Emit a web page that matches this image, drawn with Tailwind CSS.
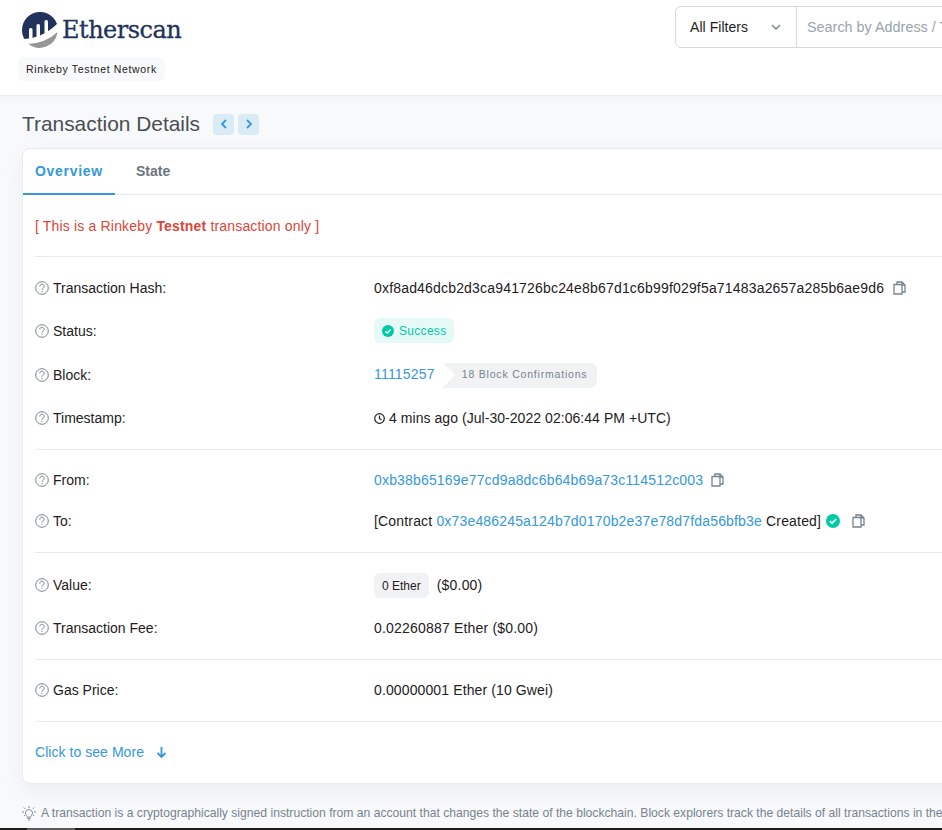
<!DOCTYPE html>
<html lang="en">
<head>
    <meta charset="UTF-8">
    <meta name="viewport" content="width=device-width, initial-scale=1.0">
    <title>Transaction Details</title>
    <script src="https://cdn.jsdelivr.net/npm/@tailwindcss/browser@4"></script>
</head>
<body class="bg-[#f8f9fa] font-['Liberation_Sans',Arial,sans-serif] text-[14px] text-[#1e2022] w-[942px] h-[830px] overflow-hidden relative">

    <!-- header -->
    <header class="bg-white h-[96px] border-b border-[#e7eaf3] flex justify-between shadow-[0_1px_10px_rgba(151,164,175,0.1)]">
        <div class="pl-[22px] pt-[12px]">
            <div class="flex items-center h-[36px]">
                <svg class="w-[36px] h-[36px]" viewBox="0 0 36 36">
                    <circle cx="18" cy="18" r="18" fill="#21325b"/>
                    <rect x="7" y="16" width="3.500" height="14" rx="1.500" fill="#fff"/>
                    <rect x="14.500" y="12" width="3.500" height="16" rx="1.500" fill="#fff"/>
                    <rect x="22.500" y="8" width="3.500" height="16" rx="1.500" fill="#fff"/>
                    <path d="M0 27Q20 27 36 11L40 40H0z" fill="#fff"/>
                    <path d="M6 32Q24 31 35.500 20A18 18 0 0 1 6 31.500z" fill="#979695"/>
                </svg>
                <span class="ml-[4px] font-['DejaVu_Serif',serif] text-[24px] leading-none text-[#21325b] tracking-[-0.5px] [-webkit-text-stroke:0.3px_#21325b]">Etherscan</span>
            </div>
            <div class="mt-[9px] -ml-[4px] inline-block bg-[#f8f9fa] rounded-md px-[8px] h-[24px] leading-[24px] text-[10.5px] tracking-[0.65px]">
                <span>Rinkeby Testnet Network</span>
            </div>
        </div>
        <div class="pt-[6px]">
            <div class="flex w-[400px] h-[42px] -mr-[133px] border border-[#d5dae2] rounded-l-md">
                <div class="w-[121px] flex items-center justify-between pl-[14px] pr-[15px] border-r border-[#d5dae2]">
                    <span class="tracking-[0.05px] pt-[1px]">All Filters</span>
                    <svg class="w-[10px] h-[10px]" viewBox="0 0 10 10" fill="none" stroke="#77838f" stroke-width="1.500"><path d="M1 3l4 4 4-4"/></svg>
                </div>
                <div class="pl-[10px] pt-[1px] flex items-center text-[14.4px] text-[#97a4af] whitespace-nowrap">Search by Address / Txn Hash / Block</div>
            </div>
        </div>
    </header>

    <main class="w-[1100px] pl-[22px]">
        <div class="h-[52px] pt-[4px] flex items-center gap-[4px]">
            <h1 class="w-[178px] whitespace-nowrap text-[20.9px] text-[#4a4f55] mr-[9px]">Transaction Details</h1>
            <a class="w-[21px] h-[21px] rounded bg-[#3498db]/15 flex items-center justify-center">
                <svg class="w-[10px] h-[10px]" viewBox="0 0 10 10" fill="none" stroke="#3498db" stroke-width="1.800"><path d="M7 1L3 5l4 4"/></svg>
            </a>
            <a class="w-[21px] h-[21px] rounded bg-[#3498db]/15 flex items-center justify-center">
                <svg class="w-[10px] h-[10px]" viewBox="0 0 10 10" fill="none" stroke="#3498db" stroke-width="1.800"><path d="M3 1l4 4-4 4"/></svg>
            </a>
        </div>

        <!-- card -->
        <section class="bg-white border border-[#e7eaf3] rounded-lg h-[636px] shadow-[0_8px_20px_rgba(189,197,209,0.2)]">
            <nav class="h-[46px] border-b border-[#e7eaf3] flex font-bold">
                <a class="w-[92px] h-[46px] pl-[12px] pt-[12px] text-[#3498db] border-b-2 border-[#3498db] tracking-[0.7px]">Overview</a>
                <a class="pl-[21px] pt-[12px] text-[#6c757e]">State</a>
            </nav>

            <div class="px-[12px]">
                <div class="h-[62px] pt-[1px] flex items-center border-b border-[#e7eaf3] text-[#de4437] tracking-[0.17px]">
                    <span>[ This is a Rinkeby <b>Testnet</b> transaction only ]</span>
                </div>

                <div class="pt-[10px] pb-[10px] border-b border-[#e7eaf3]">
                    <div class="flex items-center h-[43px]">
                        <div class="w-[339px] flex items-center">
                            <svg class="w-[14px] h-[14px] mr-[4px] -mt-px" viewBox="0 0 14 14" fill="none" stroke="#77838f"><circle cx="7" cy="7" r="6.300"/><path d="M4.800 5.500c0-3 4.400-3 4.400 0 0 1.600-2.200 1.700-2.200 3.200"/><path d="M7 9.800v1.200"/></svg>
                            <span>Transaction Hash:</span>
                        </div>
                        <span class="tracking-[0.18px]">0xf8ad46dcb2d3ca941726bc24e8b67d1c6b99f029f5a71483a2657a285b6ae9d6</span>
                        <svg class="w-[13px] h-[14px] ml-[9px] -mt-px" viewBox="0 0 13 14" fill="none" stroke="#77838f" stroke-width="1.300"><path d="M4 3V1h5l3 3v7H9"/><path d="M9 1v3h3"/><path d="M1 3.500h8V13H1z"/></svg>
                    </div>
                    <div class="flex items-center h-[43px]">
                        <div class="w-[339px] flex items-center">
                            <svg class="w-[14px] h-[14px] mr-[4px] -mt-px" viewBox="0 0 14 14" fill="none" stroke="#77838f"><circle cx="7" cy="7" r="6.300"/><path d="M4.800 5.500c0-3 4.400-3 4.400 0 0 1.600-2.200 1.700-2.200 3.200"/><path d="M7 9.800v1.200"/></svg>
                            <span>Status:</span>
                        </div>
                        <span class="-mt-[2px] h-[25px] px-[8px] rounded-md bg-[#00c9a7]/10 text-[#00c9a7] text-[12px] tracking-[0.3px] flex items-center gap-[5px]">
                            <svg class="w-[12px] h-[12px]" viewBox="0 0 12 12"><circle cx="6" cy="6" r="6" fill="#00c9a7"/><path d="M3.300 6.200l1.900 1.800 3.500-3.600" fill="none" stroke="#fff" stroke-width="1.500"/></svg>
                            Success
                        </span>
                    </div>
                    <div class="flex items-center h-[43px] pt-[1px]">
                        <div class="w-[339px] flex items-center">
                            <svg class="w-[14px] h-[14px] mr-[4px] -mt-px" viewBox="0 0 14 14" fill="none" stroke="#77838f"><circle cx="7" cy="7" r="6.300"/><path d="M4.800 5.500c0-3 4.400-3 4.400 0 0 1.600-2.200 1.700-2.200 3.200"/><path d="M7 9.800v1.200"/></svg>
                            <span>Block:</span>
                        </div>
                        <a class="text-[#3498db] tracking-[0.2px] -mt-px">11115257</a>
                        <span class="ml-[8px] h-[25px] w-[154px] bg-[#77838f]/10 rounded-r-md relative pl-[19px] flex items-center text-[10.500px] tracking-[0.8px] text-[#77838f]">
                            <span class="absolute left-0 top-0 border-l-[12px] border-l-white border-y-[12.500px] border-y-transparent"></span>
                            18 Block Confirmations
                        </span>
                    </div>
                    <div class="flex items-center h-[43px] pt-[1px]">
                        <div class="w-[339px] flex items-center">
                            <svg class="w-[14px] h-[14px] mr-[4px] -mt-px" viewBox="0 0 14 14" fill="none" stroke="#77838f"><circle cx="7" cy="7" r="6.300"/><path d="M4.800 5.500c0-3 4.400-3 4.400 0 0 1.600-2.200 1.700-2.200 3.200"/><path d="M7 9.800v1.200"/></svg>
                            <span>Timestamp:</span>
                        </div>
                        <svg class="w-[11px] h-[11px] mr-[4px]" viewBox="0 0 11 11" fill="none" stroke="#1e2022" stroke-width="1.200"><circle cx="5.500" cy="5.500" r="4.800"/><path d="M5.500 2.500v3.200l2 1.200"/></svg>
                        <span class="tracking-[0.05px]">4 mins ago (Jul-30-2022 02:06:44 PM +UTC)</span>
                    </div>
                </div>

                <div class="pt-[10px] pb-[10px] border-b border-[#e7eaf3]">
                    <div class="flex items-center h-[41px]">
                        <div class="w-[339px] flex items-center">
                            <svg class="w-[14px] h-[14px] mr-[4px] -mt-px" viewBox="0 0 14 14" fill="none" stroke="#77838f"><circle cx="7" cy="7" r="6.300"/><path d="M4.800 5.500c0-3 4.400-3 4.400 0 0 1.600-2.200 1.700-2.200 3.200"/><path d="M7 9.800v1.200"/></svg>
                            <span>From:</span>
                        </div>
                        <a class="text-[#3498db] tracking-[0.17px]">0xb38b65169e77cd9a8dc6b64b69a73c114512c003</a>
                        <svg class="w-[13px] h-[14px] ml-[8px] -mt-px" viewBox="0 0 13 14" fill="none" stroke="#77838f" stroke-width="1.300"><path d="M4 3V1h5l3 3v7H9"/><path d="M9 1v3h3"/><path d="M1 3.500h8V13H1z"/></svg>
                    </div>
                    <div class="flex items-center h-[41px]">
                        <div class="w-[339px] flex items-center">
                            <svg class="w-[14px] h-[14px] mr-[4px] -mt-px" viewBox="0 0 14 14" fill="none" stroke="#77838f"><circle cx="7" cy="7" r="6.300"/><path d="M4.800 5.500c0-3 4.400-3 4.400 0 0 1.600-2.200 1.700-2.200 3.200"/><path d="M7 9.800v1.200"/></svg>
                            <span>To:</span>
                        </div>
                        <span class="tracking-[0.17px]">[Contract <a class="text-[#3498db]">0x73e486245a124b7d0170b2e37e78d7fda56bfb3e</a> Created]</span>
                        <svg class="w-[14px] h-[14px] ml-[5px] -mt-px" viewBox="0 0 14 14"><circle cx="7" cy="7" r="7" fill="#00c9a7"/><path d="M3.800 7.200l2.200 2 4.200-4.200" fill="none" stroke="#fff" stroke-width="1.700"/></svg>
                        <svg class="w-[13px] h-[14px] ml-[12px] -mt-px" viewBox="0 0 13 14" fill="none" stroke="#77838f" stroke-width="1.300"><path d="M4 3V1h5l3 3v7H9"/><path d="M9 1v3h3"/><path d="M1 3.500h8V13H1z"/></svg>
                    </div>
                </div>

                <div class="pt-[11px] pb-[9px] border-b border-[#e7eaf3]">
                    <div class="flex items-center h-[43px]">
                        <div class="w-[339px] flex items-center">
                            <svg class="w-[14px] h-[14px] mr-[4px] -mt-px" viewBox="0 0 14 14" fill="none" stroke="#77838f"><circle cx="7" cy="7" r="6.300"/><path d="M4.800 5.500c0-3 4.400-3 4.400 0 0 1.600-2.200 1.700-2.200 3.200"/><path d="M7 9.800v1.200"/></svg>
                            <span>Value:</span>
                        </div>
                        <span class="h-[25px] px-[8px] rounded-md bg-[#77838f]/10 text-[12px] flex items-center">0 Ether</span>
                        <span class="ml-[8px] tracking-[0.2px]">($0.00)</span>
                    </div>
                    <div class="flex items-center h-[43px]">
                        <div class="w-[339px] flex items-center">
                            <svg class="w-[14px] h-[14px] mr-[4px] -mt-px" viewBox="0 0 14 14" fill="none" stroke="#77838f"><circle cx="7" cy="7" r="6.300"/><path d="M4.800 5.500c0-3 4.400-3 4.400 0 0 1.600-2.200 1.700-2.200 3.200"/><path d="M7 9.800v1.200"/></svg>
                            <span>Transaction Fee:</span>
                        </div>
                        <span class="tracking-[0.19px]">0.02260887 Ether ($0.00)</span>
                    </div>
                </div>

                <div class="h-[62px] flex items-center border-b border-[#e7eaf3]">
                    <div class="w-[339px] flex items-center">
                        <svg class="w-[14px] h-[14px] mr-[4px] -mt-px" viewBox="0 0 14 14" fill="none" stroke="#77838f"><circle cx="7" cy="7" r="6.300"/><path d="M4.800 5.500c0-3 4.400-3 4.400 0 0 1.600-2.200 1.700-2.200 3.200"/><path d="M7 9.800v1.200"/></svg>
                        <span>Gas Price:</span>
                    </div>
                    <span class="tracking-[0.12px]">0.00000001 Ether (10 Gwei)</span>
                </div>

                <div class="h-[61px] flex items-center text-[#3498db]">
                    <span class="tracking-[0.05px]">Click to see More</span>
                    <svg class="w-[11px] h-[12px] ml-[12px] -mt-px" viewBox="0 0 11 12" fill="none" stroke="#3498db" stroke-width="1.800"><path d="M5.500 1v10M1.500 7l4 4 4-4"/></svg>
                </div>
            </div>
        </section>

        <p class="mt-[20px] flex items-center whitespace-nowrap text-[12.15px] text-[#77838f]">
            <svg class="w-[16px] h-[16px] mr-[4px] -ml-px" viewBox="0 0 16 16" fill="none" stroke="#77838f" stroke-width="0.900"><path d="M5.500 10.500a3.500 3.500 0 1 1 5 0c-.6.6-.8 1-.8 1.700H6.300c0-.7-.2-1.100-.8-1.700zM6.500 13.500h3M7 15h2M8 1v2M1 7h2M13 7h2M2.800 2.500l1.400 1.400M13.200 2.500l-1.400 1.400M2.800 11l1.400-1M13.200 11l-1.400-1"/></svg>
            A transaction is a cryptographically signed instruction from an account that changes the state of the blockchain. Block explorers track the details of all transactions in the network.
        </p>
    </main>

    <!-- browser scrollbar caught in the screenshot -->
    <div class="absolute left-0 right-0 bottom-0 h-[2px] bg-[#1c1c1c]">
        <div class="ml-[27px] w-[48px] h-full bg-[#5a5a5a]"></div>
    </div>
</body>
</html>
